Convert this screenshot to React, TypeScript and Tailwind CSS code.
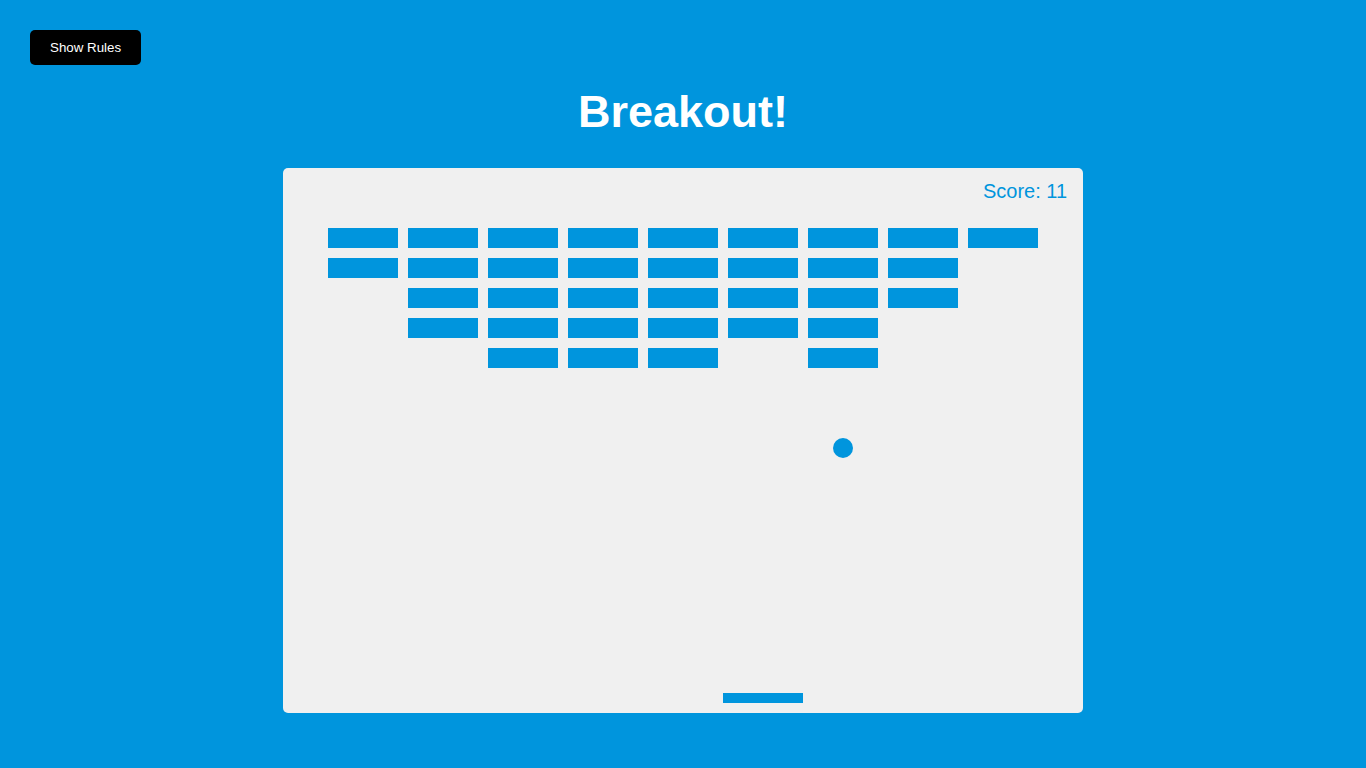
import React from "react";

const visible: boolean[][] = [
  [1, 1, 1, 1, 1, 1, 1, 1, 1],
  [1, 1, 1, 1, 1, 1, 1, 1, 0],
  [0, 1, 1, 1, 1, 1, 1, 1, 0],
  [0, 1, 1, 1, 1, 1, 1, 0, 0],
  [0, 0, 1, 1, 1, 0, 1, 0, 0],
].map((r) => r.map((v) => v === 1));

export default function App() {
  return (
    <div
      className="relative flex h-screen flex-col items-center justify-center overflow-hidden bg-[#0095dd] text-white"
      style={{ fontFamily: '"Liberation Sans", Arial, sans-serif' }}
    >
      <button className="absolute left-[30px] top-[30px] rounded-[5px] bg-black px-5 py-[10px] text-[13.333px] leading-[15px] text-white">
        Show Rules
      </button>
      <h1 className="my-[30px] text-[45px] font-bold leading-[52px]">Breakout!</h1>
      <div className="h-[545px] w-[800px] rounded-[5px] bg-[#f0f0f0]">
        <svg width="800" height="545" viewBox="0 0 800 545" className="block">
          {visible.map((row, r) =>
            row.map((v, c) =>
              v ? (
                <rect
                  key={`${r}-${c}`}
                  x={c * 80 + 45}
                  y={r * 30 + 60}
                  width={70}
                  height={20}
                  fill="#0095dd"
                />
              ) : null
            )
          )}
          <circle cx={560} cy={280} r={10} fill="#0095dd" />
          <rect x={440} y={525} width={80} height={10} fill="#0095dd" />
          <text
            x={700}
            y={30}
            fill="#0095dd"
            fontSize={20}
            fontFamily='"Liberation Sans", Arial, sans-serif'
          >
            Score: 11
          </text>
        </svg>
      </div>
    </div>
  );
}
